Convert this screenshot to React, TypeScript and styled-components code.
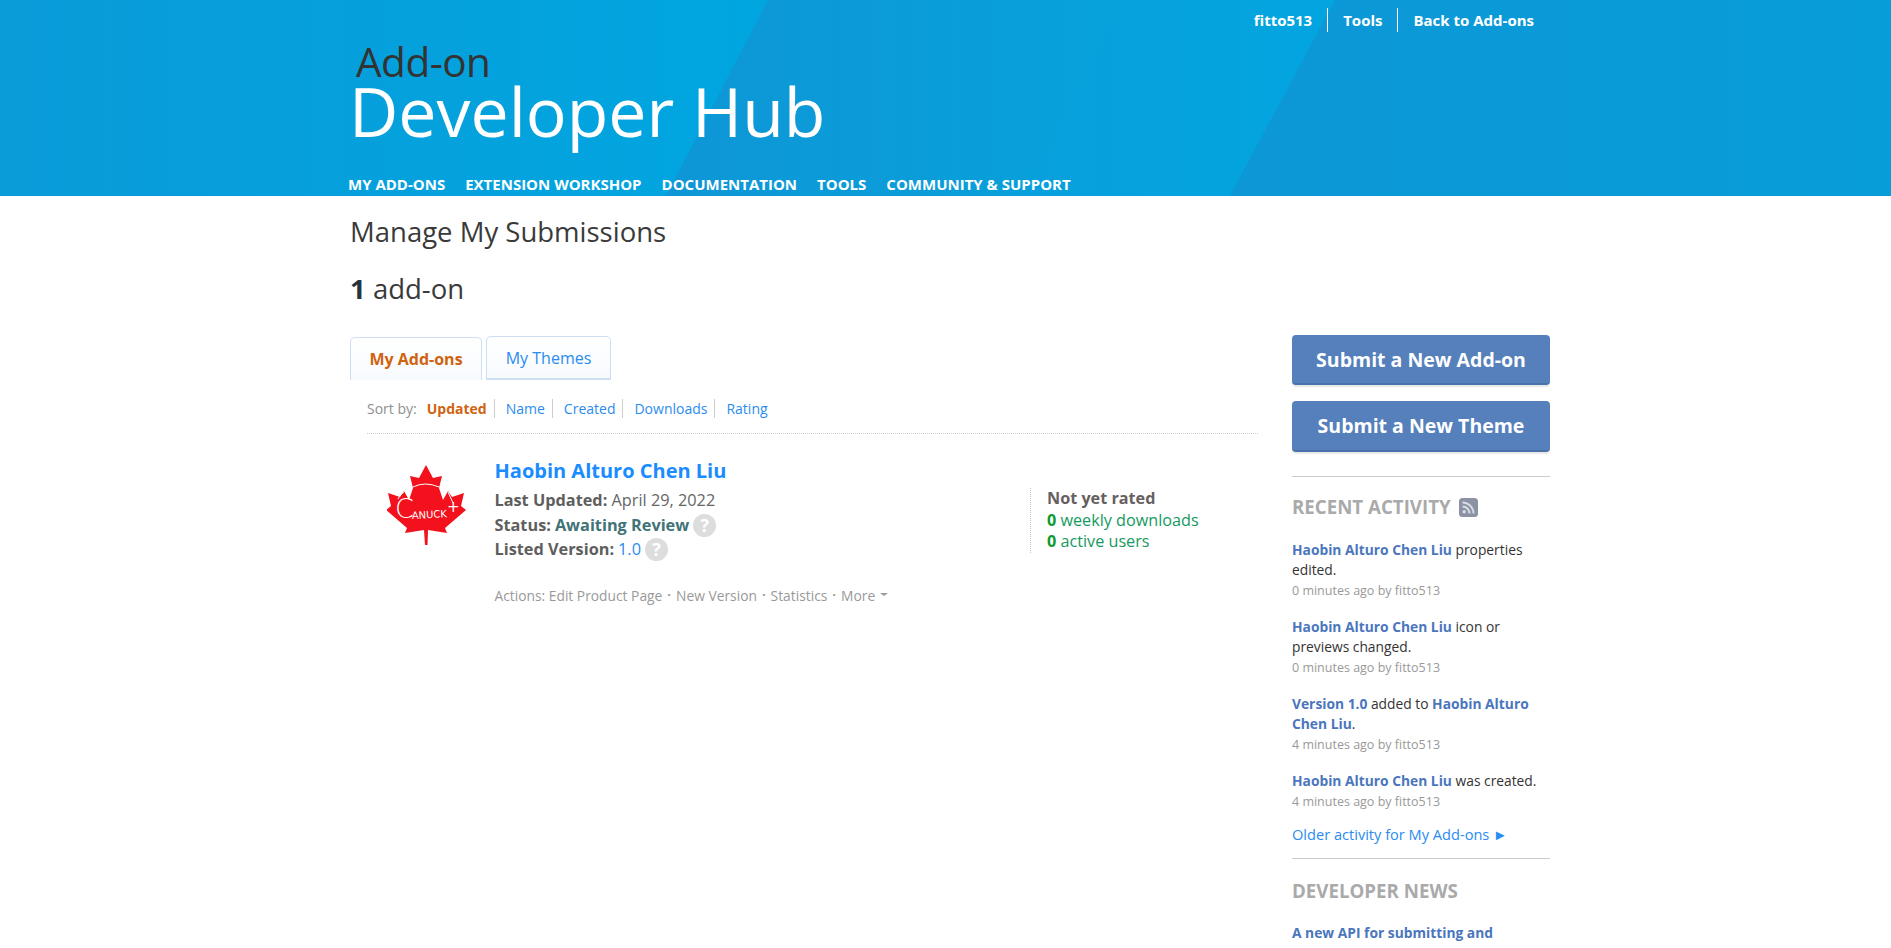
import React from "react";
import styled, { createGlobalStyle } from "styled-components";

const Global = createGlobalStyle`
  html, body { margin: 0; padding: 0; height: 948px; overflow: hidden; background: #fff; }
  body { font-family: "Open Sans", "Liberation Sans", sans-serif; font-size: 14px; color: #333; }
  a { text-decoration: none; }
`;

const Header = styled.header`
  position: relative;
  height: 196px;
  background: #079dd9;
  overflow: hidden;
`;
const HeaderArt = styled.svg`
  position: absolute;
  inset: 0;
  width: 100%;
  height: 100%;
`;
const HeaderInner = styled.div`
  position: relative;
  width: 1200px;
  height: 196px;
  margin-left: 350px;
  display: flex;
  flex-direction: column;
`;
const TopLinks = styled.nav`
  display: flex;
  justify-content: flex-end;
  padding: 8px 16px 0 0;
  height: 24px;
`;
const TopLink = styled.a<{ $first?: boolean }>`
  color: #fff;
  font-size: 15px;
  font-weight: 700;
  line-height: 24px;
  padding: 0 15px;
  border-left: ${(p) => (p.$first ? "none" : "1px solid #fff")};
  &:last-child { padding-right: 0; }
`;
const Logo = styled.h1`
  margin: 7px 0 0;
  font-weight: 400;
  display: flex;
  flex-direction: column;
`;
const LogoSmall = styled.span`
  font-size: 40.5px;
  line-height: 46px;
  color: #333;
  padding-left: 6px;
  letter-spacing: -0.5px;
`;
const LogoBig = styled.span`
  font-size: 68px;
  line-height: 72px;
  margin: -10px 0 0 -1px;
  color: #fff;
`;
const MainNav = styled.nav`
  margin-top: auto;
  display: flex;
  gap: 20px;
  height: 24px;
  margin-left: -2px;
`;
const MainNavLink = styled.a`
  color: #fff;
  font-size: 15px;
  font-weight: 700;
  line-height: 24px;
  text-transform: uppercase;
`;
const Page = styled.main`
  width: 1200px;
  margin-left: 350px;
`;
const Title = styled.h2`
  margin: 16px 0 0;
  font-size: 27.5px;
  line-height: 40px;
  font-weight: 400;
  color: #3a3a3a;
`;
const Count = styled.h3`
  margin: 17px 0 0;
  font-size: 27.5px;
  line-height: 40px;
  font-weight: 400;
  color: #3a3a3a;
  b { color: #24343f; font-weight: 700; }
`;
const Columns = styled.div`
  display: flex;
  justify-content: space-between;
  margin-top: 26px;
`;
const Primary = styled.section`
  width: 908px;
`;
const Tabs = styled.div`
  display: flex;
  align-items: flex-end;
  gap: 4px;
  height: 45px;
`;
const Tab = styled.a<{ $active?: boolean }>`
  box-sizing: border-box;
  display: flex;
  align-items: center;
  justify-content: center;
  font-size: 16px;
  border-radius: 5px 5px 0 0;
  height: ${(p) => (p.$active ? "43px" : "44px")};
  width: ${(p) => (p.$active ? "132px" : "125px")};
  color: ${(p) => (p.$active ? "#cf6310" : "#2a8cf0")};
  font-weight: ${(p) => (p.$active ? 700 : 400)};
  border: 1px solid #cfdff3;
  border-bottom: ${(p) => (p.$active ? "none" : "2px solid #cfdff3")};
  background: linear-gradient(#fff, #f7fafd);
  margin-top: ${(p) => (p.$active ? "1px" : "0")};
`;
const Listing = styled.div`
  padding-left: 17px;
`;
const SortBar = styled.div`
  display: flex;
  align-items: center;
  box-sizing: border-box;
  height: 54px;
  padding-top: 3px;
  border-bottom: 1px dotted #c8d0d8;
  font-size: 14px;
`;
const SortLabel = styled.span`
  color: #8f8f8f;
  margin-right: 10px;
`;
const SortItem = styled.a<{ $active?: boolean; $last?: boolean }>`
  color: ${(p) => (p.$active ? "#cf6310" : "#2a8cf0")};
  font-weight: ${(p) => (p.$active ? 700 : 400)};
  line-height: 19px;
  padding-right: 7px;
  margin-right: 11px;
  border-right: ${(p) => (p.$last ? "none" : "1px solid #ccc")};
`;
const Item = styled.article`
  display: flex;
  padding-top: 25px;
`;
const IconBox = styled.div`
  width: 127.5px;
  padding: 6px 0 0 20px;
  box-sizing: border-box;
  flex: none;
`;
const ItemBody = styled.div`
  flex: 1;
`;
const ItemName = styled.a`
  display: block;
  font-size: 20px;
  line-height: 24px;
  font-weight: 700;
  color: #1a8cff;
`;
const InfoRow = styled.div`
  display: flex;
  align-items: center;
  gap: 4px;
  font-size: 16.3px;
  line-height: 24px;
  color: #666;
  b { font-weight: 700; color: #5e5e5e; }
`;
const InfoFirst = styled(InfoRow)`
  margin: 5px 0 1px;
`;
const StatusText = styled.b`
  && { color: #3f7378; }
`;
const VersionLink = styled.a`
  color: #2a8cf0;
`;
const Help = styled.span`
  display: inline-flex;
  align-items: center;
  justify-content: center;
  width: 23px;
  height: 23px;
  border-radius: 50%;
  background: #ddd;
  color: #fff;
  font-size: 18px;
  font-weight: 700;
`;
const Actions = styled.div`
  display: flex;
  align-items: center;
  margin-top: 25px;
  font-size: 13.8px;
  line-height: 20px;
  color: #999;
`;
const ActionSep = styled.span`
  margin: -5px 5px 0 5px;
  font-size: 13px;
  font-weight: 700;
`;
const Caret = styled.span`
  width: 0;
  height: 0;
  margin: -4px 0 0 5px;
  border-left: 4px solid transparent;
  border-right: 4px solid transparent;
  border-top: 3px solid #999;
`;
const Stats = styled.div`
  width: 228px;
  flex: none;
  box-sizing: border-box;
  margin: 29px 0 0;
  height: 65px;
  padding-left: 16px;
  border-left: 1px dotted #b8c6d4;
  font-size: 16.2px;
  line-height: 21.7px;
`;
const Rated = styled.div`
  font-weight: 700;
  color: #666060;
`;
const Stat = styled.div`
  color: #159a5e;
  b { color: #0b9a2e; font-weight: 700; }
`;
const Sidebar = styled.aside`
  width: 258px;
`;
const Submit = styled.a`
  box-sizing: border-box;
  display: flex;
  align-items: center;
  justify-content: center;
  height: 50px;
  margin-bottom: 16px;
  border-radius: 4px;
  background: #5580bc;
  border-bottom: 2px solid #4a72aa;
  box-shadow: 0 2px 1px #e8e8e8;
  color: #fff;
  font-size: 19.5px;
  font-weight: 700;
  & + & { height: 51px; }
`;
const Block = styled.div`
  border-top: 1px solid #ccc;
`;
const BlockTitle = styled.h4`
  display: flex;
  align-items: center;
  gap: 8px;
  margin: 0;
  font-size: 18.7px;
  line-height: 24px;
  font-weight: 700;
  color: #aaa;
  text-transform: uppercase;
`;
const ActivityBlock = styled(Block)`
  margin-top: 24px;
  padding-top: 18px;
`;
const NewsBlock = styled(Block)`
  margin-top: 13px;
  padding-top: 20px;
`;
const ActivityList = styled.ul`
  list-style: none;
  margin: 21px 0 0;
  padding: 0;
`;
const Activity = styled.li`
  margin-bottom: 16px;
  font-size: 13.8px;
  line-height: 20px;
  color: #333;
  b { color: #4a76bd; font-weight: 700; }
`;
const Meta = styled.div`
  color: #999;
  font-size: 12.5px;
  line-height: 21px;
`;
const Older = styled.a`
  display: block;
  margin-top: -5px;
  font-size: 14.6px;
  line-height: 22px;
  color: #2a8cf0;
`;
const NewsLink = styled.a`
  display: block;
  margin-top: 20px;
  font-size: 13.8px;
  line-height: 20px;
  font-weight: 700;
  color: #4a76bd;
`;

const MapleIcon = () => (
  <svg width="80" height="81" viewBox="0 0 80 81">
    <path
      fill="#f2111d"
      d="M39 0 L46 13 L55 11 L52 23 L56 35 L61 26 L65 32 L77 28 L74 41 L79 45 L58 63 L60 68 L41 65 L40.5 80 L38 80 L37 65 L18 68 L20 63 L-1 45 L4 41 L1 28 L13 32 L17 26 L22 35 L26 23 L23 11 L32 13 Z"
    />
    <path d="M26 22 Q38 16 52 22" fill="none" stroke="#fff" strokeWidth="1" />
    <path d="M17 27 Q12 30 11 34 M61 27 L66 38" fill="none" stroke="#fff" strokeWidth="1" />
    <text x="8" y="53" fill="#fff" fontFamily="DejaVu Sans" fontSize="27" fontWeight="300">C</text>
    <text x="25" y="54" fill="#fff" fontFamily="DejaVu Sans" fontSize="10" transform="rotate(-3 25 54)">ANUCK</text>
    <text x="60" y="47" fill="#fff" fontFamily="DejaVu Sans" fontSize="15">+</text>
  </svg>
);

const RssIcon = () => (
  <svg width="19" height="19" viewBox="0 0 19 19">
    <rect width="19" height="19" rx="3.5" fill="#8b92a3" />
    <circle cx="5.2" cy="13.8" r="1.8" fill="#d8dbe1" />
    <path d="M3.5 8.5a7 7 0 0 1 7 7M3.5 4.5a11 11 0 0 1 11 11" fill="none" stroke="#d8dbe1" strokeWidth="2" />
  </svg>
);

export default function App() {
  return (
    <>
      <Global />
      <Header>
        <HeaderArt viewBox="0 0 1891 196" preserveAspectRatio="none">
          <defs>
            <linearGradient id="g1" x1="0" y1="0" x2="1" y2="0">
              <stop offset="0" stopColor="#0a9bd9" />
              <stop offset="1" stopColor="#00a6e0" />
            </linearGradient>
            <linearGradient id="g2" x1="0" y1="0" x2="1" y2="0">
              <stop offset="0" stopColor="#0e96d6" />
              <stop offset="1" stopColor="#07a2dc" />
            </linearGradient>
            <linearGradient id="g3" x1="0" y1="0" x2="1" y2="0">
              <stop offset="0" stopColor="#08a0dc" />
              <stop offset="1" stopColor="#02a5e0" />
            </linearGradient>
            <linearGradient id="g4" x1="0" y1="0" x2="1" y2="0">
              <stop offset="0" stopColor="#0d97d7" />
              <stop offset="1" stopColor="#079dd9" />
            </linearGradient>
          </defs>
          <polygon points="0,0 768,0 666,196 0,196" fill="url(#g1)" />
          <polygon points="768,0 1122,0 1019,196 666,196" fill="url(#g2)" />
          <polygon points="1122,0 1335,0 1230,196 1019,196" fill="url(#g3)" />
          <polygon points="1335,0 1891,0 1891,196 1230,196" fill="url(#g4)" />
        </HeaderArt>
        <HeaderInner>
          <TopLinks>
            <TopLink $first href="#">fitto513</TopLink>
            <TopLink href="#">Tools</TopLink>
            <TopLink href="#">Back to Add-ons</TopLink>
          </TopLinks>
          <Logo>
            <LogoSmall>Add-on</LogoSmall>
            <LogoBig>Developer Hub</LogoBig>
          </Logo>
          <MainNav>
            <MainNavLink href="#">My Add-ons</MainNavLink>
            <MainNavLink href="#">Extension Workshop</MainNavLink>
            <MainNavLink href="#">Documentation</MainNavLink>
            <MainNavLink href="#">Tools</MainNavLink>
            <MainNavLink href="#">Community &amp; Support</MainNavLink>
          </MainNav>
        </HeaderInner>
      </Header>
      <Page>
        <Title>Manage My Submissions</Title>
        <Count><b>1</b> add-on</Count>
        <Columns>
          <Primary>
            <Tabs>
              <Tab $active href="#">My Add-ons</Tab>
              <Tab href="#">My Themes</Tab>
            </Tabs>
            <Listing>
              <SortBar>
                <SortLabel>Sort by:</SortLabel>
                <SortItem $active href="#">Updated</SortItem>
                <SortItem href="#">Name</SortItem>
                <SortItem href="#">Created</SortItem>
                <SortItem href="#">Downloads</SortItem>
                <SortItem $last href="#">Rating</SortItem>
              </SortBar>
              <Item>
                <IconBox><MapleIcon /></IconBox>
                <ItemBody>
                  <ItemName href="#">Haobin Alturo Chen Liu</ItemName>
                  <InfoFirst><span><b>Last Updated:</b> April 29, 2022</span></InfoFirst>
                  <InfoRow><b>Status:</b><StatusText>Awaiting Review</StatusText><Help>?</Help></InfoRow>
                  <InfoRow><b>Listed Version:</b><VersionLink href="#">1.0</VersionLink><Help>?</Help></InfoRow>
                  <Actions>
                    Actions: Edit Product Page<ActionSep>·</ActionSep>New Version<ActionSep>·</ActionSep>Statistics<ActionSep>·</ActionSep>More<Caret />
                  </Actions>
                </ItemBody>
                <Stats>
                  <Rated>Not yet rated</Rated>
                  <Stat><b>0</b> weekly downloads</Stat>
                  <Stat><b>0</b> active users</Stat>
                </Stats>
              </Item>
            </Listing>
          </Primary>
          <Sidebar>
            <Submit href="#">Submit a New Add-on</Submit>
            <Submit href="#">Submit a New Theme</Submit>
            <ActivityBlock>
              <BlockTitle>Recent Activity <RssIcon /></BlockTitle>
              <ActivityList>
                <Activity><b>Haobin Alturo Chen Liu</b> properties edited.<Meta>0 minutes ago by fitto513</Meta></Activity>
                <Activity><b>Haobin Alturo Chen Liu</b> icon or previews changed.<Meta>0 minutes ago by fitto513</Meta></Activity>
                <Activity><b>Version 1.0</b> added to <b>Haobin Alturo Chen Liu</b>.<Meta>4 minutes ago by fitto513</Meta></Activity>
                <Activity><b>Haobin Alturo Chen Liu</b> was created.<Meta>4 minutes ago by fitto513</Meta></Activity>
              </ActivityList>
              <Older href="#">Older activity for My Add-ons ►</Older>
            </ActivityBlock>
            <NewsBlock>
              <BlockTitle>Developer News</BlockTitle>
              <NewsLink href="#">A new API for submitting and</NewsLink>
            </NewsBlock>
          </Sidebar>
        </Columns>
      </Page>
    </>
  );
}
